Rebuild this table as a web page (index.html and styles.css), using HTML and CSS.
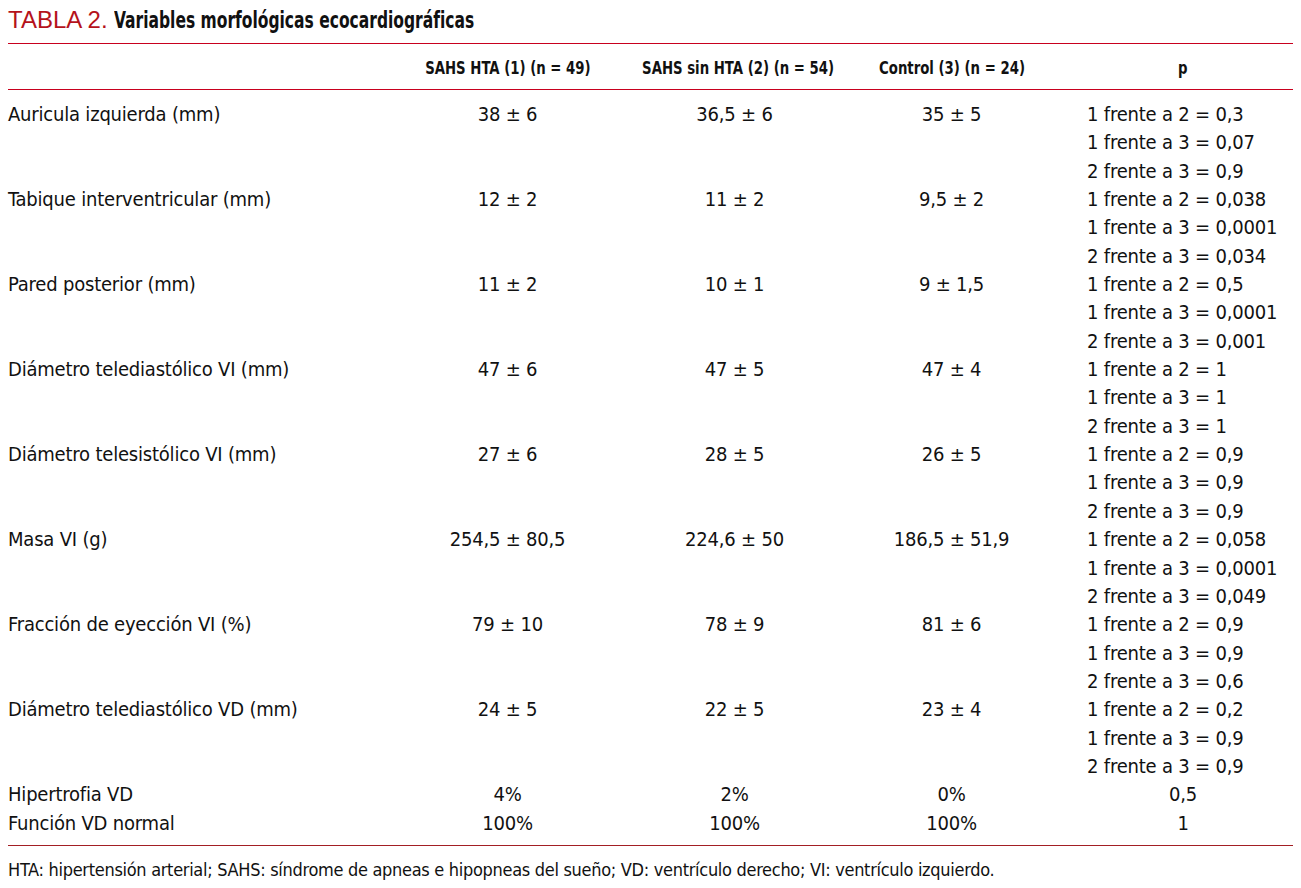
FILE: index.html
```html
<!DOCTYPE html>
<html lang="es">
<head>
<meta charset="utf-8">
<title>Tabla 2</title>
<link rel="stylesheet" href="styles.css">
</head>
<body>
<div class="page">
  <h1 class="title"><span class="label">TABLA 2.</span> <span class="name">Variables morfológicas ecocardiográficas</span></h1>
  <div class="head row">
    <div class="c0"></div>
    <div class="c1"><span class="hd">SAHS HTA (1) (n = 49)</span></div>
    <div class="c2"><span class="hd">SAHS sin HTA (2) (n = 54)</span></div>
    <div class="c3"><span class="hd">Control (3) (n = 24)</span></div>
    <div class="c4 center"><span class="hd">p</span></div>
  </div>
  <div class="body">
    <div class="row">
      <div class="c0">Auricula izquierda (mm)</div>
      <div class="c1">38 ± 6</div>
      <div class="c2">36,5 ± 6</div>
      <div class="c3">35 ± 5</div>
      <div class="c4"><div>1 frente a 2 = 0,3</div><div>1 frente a 3 = 0,07</div><div>2 frente a 3 = 0,9</div></div>
    </div>
    <div class="row">
      <div class="c0">Tabique interventricular (mm)</div>
      <div class="c1">12 ± 2</div>
      <div class="c2">11 ± 2</div>
      <div class="c3">9,5 ± 2</div>
      <div class="c4"><div>1 frente a 2 = 0,038</div><div>1 frente a 3 = 0,0001</div><div>2 frente a 3 = 0,034</div></div>
    </div>
    <div class="row">
      <div class="c0">Pared posterior (mm)</div>
      <div class="c1">11 ± 2</div>
      <div class="c2">10 ± 1</div>
      <div class="c3">9 ± 1,5</div>
      <div class="c4"><div>1 frente a 2 = 0,5</div><div>1 frente a 3 = 0,0001</div><div>2 frente a 3 = 0,001</div></div>
    </div>
    <div class="row">
      <div class="c0">Diámetro telediastólico VI (mm)</div>
      <div class="c1">47 ± 6</div>
      <div class="c2">47 ± 5</div>
      <div class="c3">47 ± 4</div>
      <div class="c4"><div>1 frente a 2 = 1</div><div>1 frente a 3 = 1</div><div>2 frente a 3 = 1</div></div>
    </div>
    <div class="row">
      <div class="c0">Diámetro telesistólico VI (mm)</div>
      <div class="c1">27 ± 6</div>
      <div class="c2">28 ± 5</div>
      <div class="c3">26 ± 5</div>
      <div class="c4"><div>1 frente a 2 = 0,9</div><div>1 frente a 3 = 0,9</div><div>2 frente a 3 = 0,9</div></div>
    </div>
    <div class="row">
      <div class="c0">Masa VI (g)</div>
      <div class="c1">254,5 ± 80,5</div>
      <div class="c2">224,6 ± 50</div>
      <div class="c3">186,5 ± 51,9</div>
      <div class="c4"><div>1 frente a 2 = 0,058</div><div>1 frente a 3 = 0,0001</div><div>2 frente a 3 = 0,049</div></div>
    </div>
    <div class="row">
      <div class="c0">Fracción de eyección VI (%)</div>
      <div class="c1">79 ± 10</div>
      <div class="c2">78 ± 9</div>
      <div class="c3">81 ± 6</div>
      <div class="c4"><div>1 frente a 2 = 0,9</div><div>1 frente a 3 = 0,9</div><div>2 frente a 3 = 0,6</div></div>
    </div>
    <div class="row">
      <div class="c0">Diámetro telediastólico VD (mm)</div>
      <div class="c1">24 ± 5</div>
      <div class="c2">22 ± 5</div>
      <div class="c3">23 ± 4</div>
      <div class="c4"><div>1 frente a 2 = 0,2</div><div>1 frente a 3 = 0,9</div><div>2 frente a 3 = 0,9</div></div>
    </div>
    <div class="row">
      <div class="c0">Hipertrofia VD</div>
      <div class="c1">4%</div>
      <div class="c2">2%</div>
      <div class="c3">0%</div>
      <div class="c4 center">0,5</div>
    </div>
    <div class="row">
      <div class="c0">Función VD normal</div>
      <div class="c1">100%</div>
      <div class="c2">100%</div>
      <div class="c3">100%</div>
      <div class="c4 center">1</div>
    </div>
  </div>
  <p class="note">HTA: hipertensión arterial; SAHS: síndrome de apneas e hipopneas del sueño; VD: ventrículo derecho; VI: ventrículo izquierdo.</p>
</div>
</body>
</html>
```

FILE: styles.css
```css
html, body {
  margin: 0;
  padding: 0;
  background: #ffffff;
}
.page {
  padding: 0 8px;
  color: #111111;
  font-family: "DejaVu Sans Condensed", "Liberation Sans Narrow", "Liberation Sans", sans-serif;
}
.title {
  margin: 0;
  height: 44px;
  padding-top: 6px;
  box-sizing: border-box;
  font-size: 24px;
  line-height: 28px;
  font-weight: normal;
  border-bottom: 1px solid #c8001e;
  white-space: nowrap;
}
.title .label {
  font-family: "Liberation Sans", sans-serif;
  color: #b5121b;
  font-weight: normal;
}
.title .name {
  display: inline-block;
  font-weight: bold;
  font-size: 23px;
  color: #111111;
  transform: scaleX(0.75);
  transform-origin: left center;
}
.row {
  display: grid;
  grid-template-columns: 386px 227px 227px 207px 18px 220px;
}
.row > .c4 { grid-column: 6; }
.c1, .c2, .c3, .center { text-align: center; }
.c4 { padding-left: 14px; }
.c4.center { padding-left: 0; }
.head {
  height: 46px;
  align-items: center;
  font-weight: bold;
  font-size: 18px;
  border-bottom: 1px solid #c8001e;
  box-sizing: border-box;
  padding-top: 1px;
  white-space: nowrap;
}
.hd {
  display: inline-block;
  transform: scaleX(0.82);
  transform-origin: center center;
}
.body {
  padding: 10px 0 8px;
  font-size: 20px;
  letter-spacing: -0.2px;
  line-height: 28.35px;
  border-bottom: 1px solid #a31f24;
}
.note {
  margin: 0;
  padding-top: 10px;
  font-size: 18px;
  letter-spacing: -0.3px;
  line-height: 28px;
}
```
